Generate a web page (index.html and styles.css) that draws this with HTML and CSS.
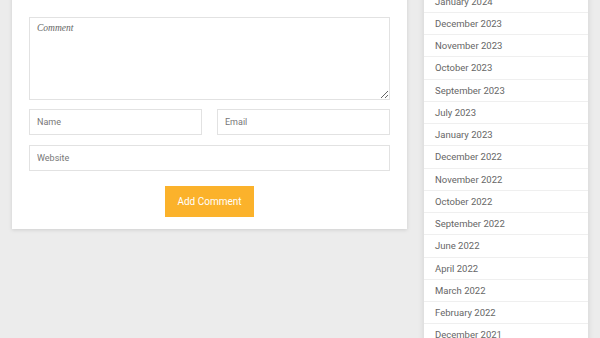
FILE: index.html
```html
<!DOCTYPE html>
<html lang="en">

<head>
    <meta charset="UTF-8">
    <meta name="viewport" content="width=device-width, initial-scale=1.0">
    <title>Comments</title>
    <link rel="stylesheet" href="styles.css">
</head>

<body>

    <div class="page">
        <div class="card">
            <form class="form">
                <textarea class="comment" placeholder="Comment"></textarea>
                <div class="row">
                    <input type="text" placeholder="Name">
                    <input type="text" placeholder="Email">
                </div>
                <input type="text" placeholder="Website">
                <button type="button" class="btn">Add Comment</button>
            </form>
        </div>

        <div class="sidebar">
            <ul class="archive">
                <li>January 2024</li>
                <li>December 2023</li>
                <li>November 2023</li>
                <li>October 2023</li>
                <li>September 2023</li>
                <li>July 2023</li>
                <li>January 2023</li>
                <li>December 2022</li>
                <li>November 2022</li>
                <li>October 2022</li>
                <li>September 2022</li>
                <li>June 2022</li>
                <li>April 2022</li>
                <li>March 2022</li>
                <li>February 2022</li>
                <li>December 2021</li>
            </ul>
        </div>
    </div>

</body>

</html>
```

FILE: styles.css
```css
*{
    margin: 0;
    padding: 0;
    box-sizing: border-box;
}
body{
    background: #ececec;
    font-family: Roboto, "Liberation Sans", sans-serif;
    overflow: hidden;
}
.page{
    display: flex;
    align-items: flex-start;
    gap: 17px;
    padding: 0 12px;
    margin-top: -20px;
}
.card{
    width: 395px;
    flex: none;
    background: #fff;
    padding: 37px 17px 12px;
    box-shadow: 0 1px 4px rgba(0, 0, 0, 0.13);
}
.form{
    display: flex;
    flex-direction: column;
}
.form textarea,
.form input{
    display: block;
    width: 100%;
    border: 1px solid #e2e2e2;
    background: #fff;
    color: #666;
    outline: 0;
}
.comment{
    height: 83px;
    padding: 5px 7px;
    font-family: "Liberation Serif", serif;
    font-style: italic;
    font-size: 9.5px;
}
.comment::placeholder{
    color: #666;
}
.form input{
    height: 26px;
    padding: 0 7px;
    font-family: Roboto, sans-serif;
    font-size: 9px;
}
.form input::placeholder{
    color: #777;
}
.row{
    display: flex;
    gap: 15px;
    margin: 9px 0 10px;
}
.btn{
    align-self: center;
    margin-top: 15px;
    width: 89px;
    height: 31px;
    border: none;
    background: #fbb22b;
    color: #fff;
    font-family: Roboto, sans-serif;
    font-size: 10px;
}
.sidebar{
    width: 164px;
    flex: none;
    margin-top: 10.5px;
    background: #fff;
    box-shadow: 0 0 6px rgba(0, 0, 0, 0.12);
}
.archive{
    list-style: none;
}
.archive li{
    height: 22.25px;
    line-height: 21.25px;
    padding-left: 11px;
    border-bottom: 1px solid #efefef;
    font-size: 9.5px;
    color: #666;
}
```
